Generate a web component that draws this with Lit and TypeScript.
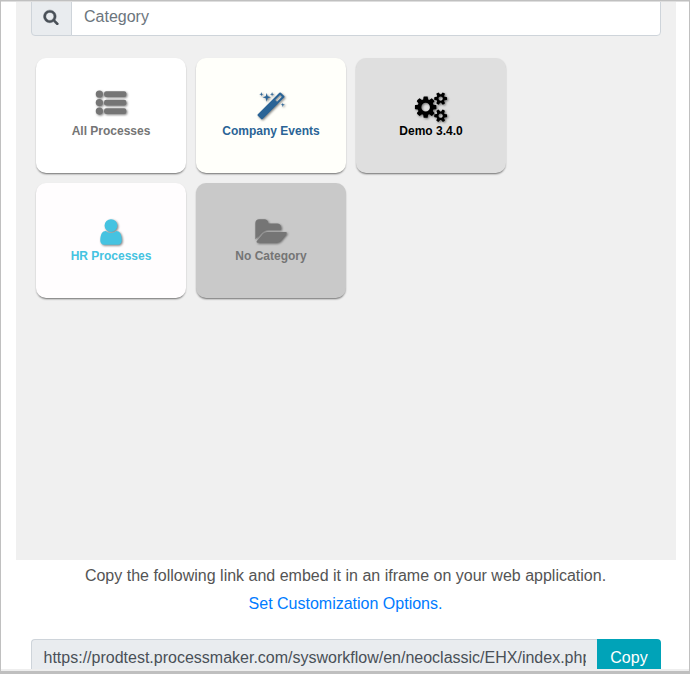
import { LitElement, html, css, svg } from "lit";
import { customElement } from "lit/decorators.js";

const icons = {
  search: svg`<path d="M1216 832q0-185-131.5-316.5t-316.5-131.5-316.5 131.5-131.5 316.5 131.5 316.5 316.5 131.5 316.5-131.5 131.5-316.5zm512 832q0 52-38 90t-90 38q-54 0-90-38l-343-342q-179 124-399 124-143 0-273.5-55.5t-225-150-150-225-55.5-273.5 55.5-273.5 150-225 225-150 273.5-55.5 273.5 55.5 225 150 150 225 55.5 273.5q0 220-124 399l343 343q37 37 37 90z"/>`,
  list: svg`<circle cx="200" cy="118" r="215"/><circle cx="200" cy="630" r="215"/><circle cx="200" cy="1142" r="215"/><rect x="480" y="-52" width="1330" height="345" rx="130"/><rect x="480" y="460" width="1330" height="345" rx="130"/><rect x="480" y="972" width="1330" height="345" rx="130"/>`,
  magic: svg`<path d="M1254 581l293-293-107-107-293 293zm447-293q0 27-18 45l-1286 1286q-18 18-45 18t-45-18l-198-198q-18-18-18-45t18-45l1286-1286q18-18 45-18t45 18l198 198q18 18 18 45zm-1351-190l98 30-98 30-30 98-30-98-98-30 98-30 30-98zm350 162l196 60-196 60-60 196-60-196-196-60 196-60 60-196zm930 478l98 30-98 30-30 98-30-98-98-30 98-30 30-98zm-640-640l98 30-98 30-30 98-30-98-98-30 98-30 30-98z"/>`,
  cogs: svg`<path transform="translate(-64 -120)" d="M896 1024q0-106-75-181t-181-75-181 75-75 181 75 181 181 75 181-75 75-181zm768 512q0-52-38-90t-90-38-90 38-38 90q0 53 37.5 90.5t90.5 37.5 90.5-37.5 37.5-90.5zm0-1024q0-52-38-90t-90-38-90 38-38 90q0 53 37.5 90.5t90.5 37.5 90.5-37.5 37.5-90.5zm-384 421v185q0 10-7 19.5t-16 10.5l-155 24q-11 35-32 76 34 48 90 115 7 11 7 20 0 12-7 19-23 30-82.5 89.5t-78.5 59.5q-11 0-21-7l-115-90q-37 19-77 31-11 108-23 155-7 24-30 24h-186q-11 0-20-7.5t-10-17.5l-23-153q-34-10-75-31l-118 89q-7 7-20 7-11 0-21-8-144-133-144-160 0-9 7-19 10-14 41-53t47-61q-23-44-35-82l-152-24q-10-1-17-9.5t-7-19.5v-185q0-10 7-19.5t16-10.5l155-24q11-35 32-76-34-48-90-115-7-11-7-20 0-12 7-20 22-30 82-89t79-59q11 0 21 7l115 90q34-18 77-32 11-108 23-154 7-24 30-24h186q11 0 20 7.5t10 17.5l23 153q34 10 75 31l118-89q8-7 20-7 11 0 21 8 144 133 144 160 0 8-7 19-12 16-42 54t-45 60q23 48 34 82l152 23q10 2 17 10.5t7 19.5zm640 533v140q0 16-149 31-12 27-30 52 51 113 51 138 0 4-4 7-122 71-124 71-8 0-46-47t-52-68q-20 2-30 2t-30-2q-14 21-52 68t-46 47q-2 0-124-71-4-3-4-7 0-25 51-138-18-25-30-52-149-15-149-31v-140q0-16 149-31 13-29 30-52-51-113-51-138 0-4 4-7 4-2 35-20t59-34 30-16q8 0 46 46.5t52 67.5q20-2 30-2t30 2q51-71 92-112l6-2q4 0 124 70 4 3 4 7 0 25-51 138 17 23 30 52 149 15 149 31zm0-1024v140q0 16-149 31-12 27-30 52 51 113 51 138 0 4-4 7-122 71-124 71-8 0-46-47t-52-68q-20 2-30 2t-30-2q-14 21-52 68t-46 47q-2 0-124-71-4-3-4-7 0-25 51-138-18-25-30-52-149-15-149-31v-140q0-16 149-31 13-29 30-52-51-113-51-138 0-4 4-7 4-2 35-20t59-34 30-16q8 0 46 46.5t52 67.5q20-2 30-2t30 2q51-71 92-112l6-2q4 0 124 70 4 3 4 7 0 25-51 138 17 23 30 52 149 15 149 31z"/>`,
  user: svg`<path d="M1536 1399q0 109-62.5 187t-150.5 78h-854q-88 0-150.5-78t-62.5-187q0-85 8.5-160.5t31.5-152 58.5-131 94-89 134.5-34.5q131 128 313 128t313-128q76 0 134.5 34.5t94 89 58.5 131 31.5 152 8.5 160.5zm-256-887q0 159-112.5 271.5t-271.5 112.5-271.5-112.5-112.5-271.5 112.5-271.5 271.5-112.5 271.5 112.5 112.5 271.5z"/>`,
  folder: svg`<path transform="translate(-40 0)" d="M1879 952q0 31-31 66l-336 396q-43 51-120.5 86.5t-143.5 35.5h-1088q-34 0-60.5-13t-26.5-43q0-31 31-66l336-396q43-51 120.5-86.5t143.5-35.5h1088q34 0 60.5 13t26.5 43zm-343-344v160h-832q-94 0-197 47.5t-164 119.5l-337 396-5 6q0-4-.5-12.5t-.5-12.5v-960q0-92 66-158t158-66h320q92 0 158 66t66 158v32h544q92 0 158 66t66 158z"/>`,
};

type IconName = keyof typeof icons;

const categories: { label: string; icon: IconName; tone: string }[] = [
  { label: "All Processes", icon: "list", tone: "all" },
  { label: "Company Events", icon: "magic", tone: "events" },
  { label: "Demo 3.4.0", icon: "cogs", tone: "demo" },
  { label: "HR Processes", icon: "user", tone: "hr" },
  { label: "No Category", icon: "folder", tone: "none" },
];

@customElement("app-root")
export class AppRoot extends LitElement {
  static styles = css`
    :host {
      display: block;
      height: 674px;
      font-family: "Liberation Sans", Arial, sans-serif;
      font-size: 16px;
      line-height: 24px;
      color: #495057;
    }
    * { box-sizing: border-box; }
    .window {
      height: 674px;
      overflow: hidden;
      border: 1px solid #c0c0c0;
      border-bottom: 3px solid #bfbfbf;
      background: #fff;
      display: flex;
      flex-direction: column;
    }
    .top-edge { height: 1px; flex: none; background: #dedede; }
    .bottom-edge { height: 2px; flex: none; background: #eee; }
    .content {
      flex: 1;
      min-height: 0;
      overflow: hidden;
      padding: 0 13px 0 15px;
    }
    .panel { height: 558px; padding: 0 15px; background: #f0f0f0; }
    .search { display: flex; height: 34px; overflow: hidden; align-items: flex-end; }
    .prefix {
      width: 41px;
      height: 38px;
      flex: none;
      display: flex;
      align-items: center;
      justify-content: center;
      background: #e9ecef;
      border: 1px solid #ced4da;
      border-radius: 4px 0 0 4px;
    }
    .prefix svg { width: 16px; height: 16px; margin-right: 1px; fill: #495057; stroke: #495057; stroke-width: 50; }
    .category {
      flex: 1;
      min-width: 0;
      height: 38px;
      margin-left: -1px;
      padding: 6px 12px;
      border: 1px solid #ced4da;
      border-radius: 0 4px 4px 0;
      background: #fff;
      color: #6c757d;
    }
    .cards { display: flex; flex-wrap: wrap; gap: 10px; padding: 22px 5px 0; }
    .card {
      width: 150px;
      height: 115px;
      padding-top: 34px;
      border-radius: 10px;
      display: flex;
      flex-direction: column;
      align-items: center;
      box-shadow: 0 2px 2px -1px rgba(0, 0, 0, 0.45), 0 1px 2px rgba(0, 0, 0, 0.14);
      font-size: 12px;
      font-weight: bold;
      line-height: 18px;
    }
    .card svg {
      width: 30px;
      height: 30px;
      flex: none;
      overflow: visible;
      fill: currentColor;
      filter: drop-shadow(1px 1px 1px rgba(0, 0, 0, 0.5));
    }
    .label { white-space: nowrap; }
    .all { background: #fff; color: #757575; }
    .events { background: #fffffa; color: #2a6496; }
    .demo { background: #dfdfdf; color: #000; }
    .hr { background: #fffdfe; color: #45c3e1; }
    .none { background: #c9c9c9; color: #757575; }
    .help { padding-top: 4px; margin-right: 1px; text-align: center; color: #545454; }
    .help div { white-space: nowrap; }
    .options { display: block; margin-top: 4px; color: #007bff; text-decoration: none; }
    .link { display: flex; height: 38px; margin: 23px 15px 0; }
    .url {
      flex: 1;
      min-width: 0;
      padding: 6px 11px 6px 11.5px;
      border: 1px solid #ced4da;
      border-right: 0;
      border-radius: 4px 0 0 4px;
      background: #e9ecef;
    }
    .url-text { overflow: hidden; white-space: nowrap; }
    .copy {
      width: 64px;
      flex: none;
      padding: 0;
      border: 0;
      border-radius: 0 4px 4px 0;
      background: #00a3b8;
      color: #fff;
      font: inherit;
    }
  `;

  private icon(name: IconName) {
    return html`<svg viewBox="0 0 1792 1792" aria-hidden="true">${icons[name]}</svg>`;
  }

  render() {
    return html`
      <div class="window">
        <div class="top-edge"></div>
        <main class="content">
          <section class="panel">
            <div class="search">
              <span class="prefix">${this.icon("search")}</span>
              <div class="category">Category</div>
            </div>
            <div class="cards">
              ${categories.map(
                (c) => html`<div class="card ${c.tone}">
                  ${this.icon(c.icon)}<span class="label">${c.label}</span>
                </div>`
              )}
            </div>
          </section>
          <div class="help">
            <div>Copy the following link and embed it in an iframe on your web application.</div>
            <a class="options">Set Customization Options.</a>
          </div>
          <div class="link">
            <div class="url"><div class="url-text">https://prodtest.processmaker.com/sysworkflow/en/neoclassic/EHX/index.php</div></div>
            <button class="copy">Copy</button>
          </div>
        </main>
        <div class="bottom-edge"></div>
      </div>
    `;
  }
}
